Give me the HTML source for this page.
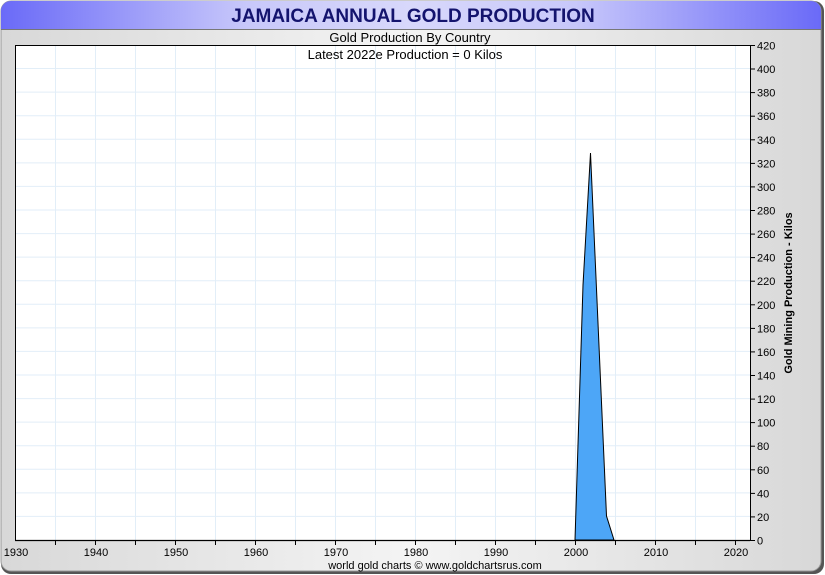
<!DOCTYPE html>
<html><head><style>
html,body{margin:0;padding:0;background:#fff;}
body{width:825px;height:575px;position:relative;overflow:hidden;font-family:"Liberation Sans",Arial,sans-serif;}
</style></head><body>
<svg width="825" height="575" xmlns="http://www.w3.org/2000/svg" style="position:absolute;left:0;top:0">
<defs>
<linearGradient id="hdr" x1="0" x2="1" y1="0" y2="0">
<stop offset="0" stop-color="#6a6af8"/><stop offset="0.3" stop-color="#c8c8fa"/><stop offset="0.5" stop-color="#d8d8fb"/><stop offset="0.7" stop-color="#c8c8fa"/><stop offset="1" stop-color="#6a6af8"/>
</linearGradient>
<linearGradient id="bg" x1="0" x2="1" y1="0" y2="0">
<stop offset="0" stop-color="#d8d8d8"/><stop offset="0.5" stop-color="#f4f4f4"/><stop offset="1" stop-color="#d8d8d8"/>
</linearGradient>
</defs>
<rect x="1" y="1" width="823" height="573" rx="10" fill="#555"/>
<rect x="1" y="1" width="820" height="570" rx="10" fill="url(#bg)" stroke="#999" stroke-width="1"/>
<path d="M1,29 V11 A10,10 0 0 1 11,1 H811 A10,10 0 0 1 821,11 V29 Z" fill="url(#hdr)"/>
<line x1="1" y1="29.5" x2="821" y2="29.5" stroke="#777"/>
<text x="413" y="22" text-anchor="middle" font-size="19" font-weight="bold" fill="#14146e">JAMAICA ANNUAL GOLD PRODUCTION</text>
<text x="410" y="42" text-anchor="middle" font-size="13" fill="#000">Gold Production By Country</text>
<rect x="15" y="45" width="735" height="495" fill="#fff"/>
<g stroke="#e2eef8" stroke-width="1">
<line x1="55.5" y1="45" x2="55.5" y2="540"/><line x1="95.5" y1="45" x2="95.5" y2="540"/><line x1="135.5" y1="45" x2="135.5" y2="540"/><line x1="175.5" y1="45" x2="175.5" y2="540"/><line x1="215.5" y1="45" x2="215.5" y2="540"/><line x1="255.5" y1="45" x2="255.5" y2="540"/><line x1="295.5" y1="45" x2="295.5" y2="540"/><line x1="335.5" y1="45" x2="335.5" y2="540"/><line x1="375.5" y1="45" x2="375.5" y2="540"/><line x1="415.5" y1="45" x2="415.5" y2="540"/><line x1="455.5" y1="45" x2="455.5" y2="540"/><line x1="495.5" y1="45" x2="495.5" y2="540"/><line x1="535.5" y1="45" x2="535.5" y2="540"/><line x1="575.5" y1="45" x2="575.5" y2="540"/><line x1="615.5" y1="45" x2="615.5" y2="540"/><line x1="655.5" y1="45" x2="655.5" y2="540"/><line x1="695.5" y1="45" x2="695.5" y2="540"/><line x1="735.5" y1="45" x2="735.5" y2="540"/>
<line x1="15" y1="68.5" x2="750" y2="68.5"/><line x1="15" y1="92.1" x2="750" y2="92.1"/><line x1="15" y1="115.7" x2="750" y2="115.7"/><line x1="15" y1="139.3" x2="750" y2="139.3"/><line x1="15" y1="162.9" x2="750" y2="162.9"/><line x1="15" y1="186.4" x2="750" y2="186.4"/><line x1="15" y1="210" x2="750" y2="210"/><line x1="15" y1="233.6" x2="750" y2="233.6"/><line x1="15" y1="257.1" x2="750" y2="257.1"/><line x1="15" y1="280.7" x2="750" y2="280.7"/><line x1="15" y1="304.3" x2="750" y2="304.3"/><line x1="15" y1="327.9" x2="750" y2="327.9"/><line x1="15" y1="351.4" x2="750" y2="351.4"/><line x1="15" y1="375" x2="750" y2="375"/><line x1="15" y1="398.6" x2="750" y2="398.6"/><line x1="15" y1="422.1" x2="750" y2="422.1"/><line x1="15" y1="445.7" x2="750" y2="445.7"/><line x1="15" y1="469.3" x2="750" y2="469.3"/><line x1="15" y1="492.9" x2="750" y2="492.9"/><line x1="15" y1="516.4" x2="750" y2="516.4"/>
</g>
<text x="405" y="59" text-anchor="middle" font-size="13" fill="#000">Latest 2022e  Production = 0 Kilos</text>
<polygon points="575,540 583,285 590.5,153 606.5,516 614,540" fill="#4da6f7" stroke="#000" stroke-width="1"/>
<line x1="15" y1="45.5" x2="750" y2="45.5" stroke="#000"/>
<line x1="15" y1="540.5" x2="750" y2="540.5" stroke="#000" stroke-width="1.3"/>
<line x1="15.5" y1="45" x2="15.5" y2="541" stroke="#000"/>
<line x1="750.5" y1="45" x2="750.5" y2="541" stroke="#000"/>
<g stroke="#000">
<line x1="55.5" y1="540" x2="55.5" y2="545"/><line x1="95.5" y1="540" x2="95.5" y2="545"/><line x1="135.5" y1="540" x2="135.5" y2="545"/><line x1="175.5" y1="540" x2="175.5" y2="545"/><line x1="215.5" y1="540" x2="215.5" y2="545"/><line x1="255.5" y1="540" x2="255.5" y2="545"/><line x1="295.5" y1="540" x2="295.5" y2="545"/><line x1="335.5" y1="540" x2="335.5" y2="545"/><line x1="375.5" y1="540" x2="375.5" y2="545"/><line x1="415.5" y1="540" x2="415.5" y2="545"/><line x1="455.5" y1="540" x2="455.5" y2="545"/><line x1="495.5" y1="540" x2="495.5" y2="545"/><line x1="535.5" y1="540" x2="535.5" y2="545"/><line x1="575.5" y1="540" x2="575.5" y2="545"/><line x1="615.5" y1="540" x2="615.5" y2="545"/><line x1="655.5" y1="540" x2="655.5" y2="545"/><line x1="695.5" y1="540" x2="695.5" y2="545"/><line x1="735.5" y1="540" x2="735.5" y2="545"/>
</g>
<g font-size="11" fill="#000" text-anchor="middle">
<text x="16" y="556">1930</text><text x="96" y="556">1940</text><text x="176" y="556">1950</text><text x="256" y="556">1960</text><text x="336" y="556">1970</text><text x="416" y="556">1980</text><text x="496" y="556">1990</text><text x="576" y="556">2000</text><text x="656" y="556">2010</text><text x="736" y="556">2020</text>
</g>
<g stroke="#000">
<line x1="750" y1="45.5" x2="755" y2="45.5"/><line x1="750" y1="69" x2="755" y2="69"/><line x1="750" y1="92.6" x2="755" y2="92.6"/><line x1="750" y1="116.2" x2="755" y2="116.2"/><line x1="750" y1="139.8" x2="755" y2="139.8"/><line x1="750" y1="163.4" x2="755" y2="163.4"/><line x1="750" y1="186.9" x2="755" y2="186.9"/><line x1="750" y1="210.5" x2="755" y2="210.5"/><line x1="750" y1="234.1" x2="755" y2="234.1"/><line x1="750" y1="257.6" x2="755" y2="257.6"/><line x1="750" y1="281.2" x2="755" y2="281.2"/><line x1="750" y1="304.8" x2="755" y2="304.8"/><line x1="750" y1="328.4" x2="755" y2="328.4"/><line x1="750" y1="351.9" x2="755" y2="351.9"/><line x1="750" y1="375.5" x2="755" y2="375.5"/><line x1="750" y1="399.1" x2="755" y2="399.1"/><line x1="750" y1="422.6" x2="755" y2="422.6"/><line x1="750" y1="446.2" x2="755" y2="446.2"/><line x1="750" y1="469.8" x2="755" y2="469.8"/><line x1="750" y1="493.4" x2="755" y2="493.4"/><line x1="750" y1="516.9" x2="755" y2="516.9"/><line x1="750" y1="540.5" x2="755" y2="540.5"/>
</g>
<g font-size="11" fill="#000">
<text x="757" y="49.5">420</text><text x="757" y="73">400</text><text x="757" y="96.6">380</text><text x="757" y="120.2">360</text><text x="757" y="143.8">340</text><text x="757" y="167.4">320</text><text x="757" y="190.9">300</text><text x="757" y="214.5">280</text><text x="757" y="238.1">260</text><text x="757" y="261.6">240</text><text x="757" y="285.2">220</text><text x="757" y="308.8">200</text><text x="757" y="332.4">180</text><text x="757" y="355.9">160</text><text x="757" y="379.5">140</text><text x="757" y="403.1">120</text><text x="757" y="426.6">100</text><text x="757" y="450.2">80</text><text x="757" y="473.8">60</text><text x="757" y="497.4">40</text><text x="757" y="520.9">20</text><text x="757" y="544.5">0</text>
</g>
<text transform="translate(792,293) rotate(-90)" text-anchor="middle" font-size="11" font-weight="bold" fill="#000">Gold Mining Production - Kilos</text>
<text x="435" y="569" text-anchor="middle" font-size="11" fill="#000">world gold charts © www.goldchartsrus.com</text>
</svg>
</body></html>
